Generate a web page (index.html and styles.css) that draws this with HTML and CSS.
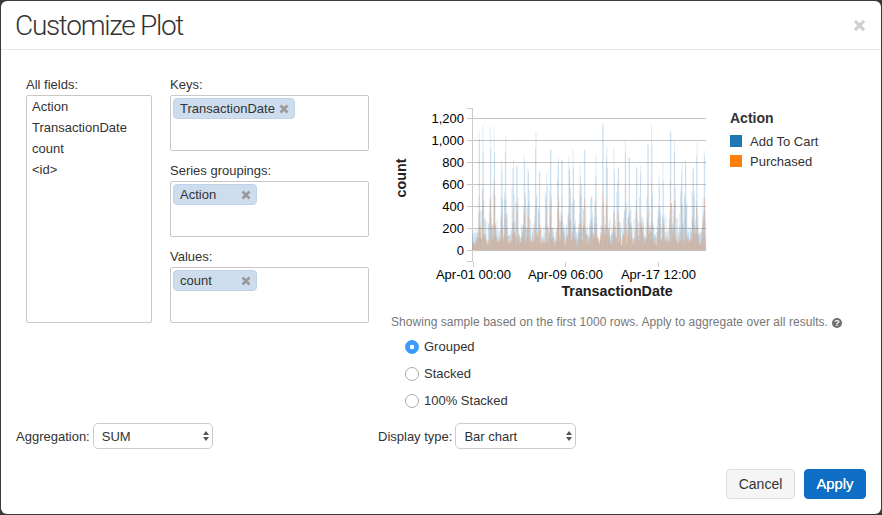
FILE: index.html
```html
<!DOCTYPE html>
<html>
<head>
    <meta charset="utf-8" />
    <title>Customize Plot</title>
    <link rel="stylesheet" href="styles.css">
</head>
<body>
    <svg class="defs" width="0" height="0">
        <symbol id="cross" viewBox="0 0 10 10">
            <path d="M1.5 1.5L8.5 8.5M8.5 1.5L1.5 8.5" />
        </symbol>
    </svg>
    <div class="modal">
        <div class="modal-header">
            <h1 class="modal-title">Customize Plot</h1>
            <svg class="close-icon"><use href="#cross" /></svg>
        </div>
        <div class="modal-body">
            <div class="main-row">
                <div class="all-fields">
                    <div class="field-label">All fields:</div>
                    <ul class="field-list">
                        <li>Action</li>
                        <li>TransactionDate</li>
                        <li>count</li>
                        <li>&lt;id&gt;</li>
                    </ul>
                </div>
                <div class="groups">
                    <div class="group">
                        <div class="field-label">Keys:</div>
                        <div class="drop-box">
                            <span class="tag">TransactionDate<svg class="tag-x"><use href="#cross" /></svg></span>
                        </div>
                    </div>
                    <div class="group">
                        <div class="field-label">Series groupings:</div>
                        <div class="drop-box">
                            <span class="tag">Action<svg class="tag-x"><use href="#cross" /></svg></span>
                        </div>
                    </div>
                    <div class="group">
                        <div class="field-label">Values:</div>
                        <div class="drop-box">
                            <span class="tag">count<svg class="tag-x"><use href="#cross" /></svg></span>
                        </div>
                    </div>
                </div>
                <div class="preview">
                    <div class="chart-row">
                        <svg id="plot" class="plot" width="326" height="204" viewBox="390 100 326 204"></svg>
                        <div class="legend">
                            <div class="legend-title">Action</div>
                            <div class="legend-item"><span class="swatch swatch-blue"></span>Add To Cart</div>
                            <div class="legend-item"><span class="swatch swatch-orange"></span>Purchased</div>
                        </div>
                    </div>
                    <div class="hint">Showing sample based on the first 1000 rows. Apply to aggregate over all results. <span class="help">?</span></div>
                    <div class="radios">
                        <div class="radio-row"><span class="radio radio-on"></span>Grouped</div>
                        <div class="radio-row"><span class="radio"></span>Stacked</div>
                        <div class="radio-row"><span class="radio"></span>100% Stacked</div>
                    </div>
                </div>
            </div>
            <div class="controls">
                <div class="control">
                    <label>Aggregation:</label>
                    <div class="select-wrap select-short">
                        <select>
                            <option>SUM</option>
                        </select>
                    </div>
                </div>
                <div class="control">
                    <label>Display type:</label>
                    <div class="select-wrap">
                        <select>
                            <option>Bar chart</option>
                        </select>
                    </div>
                </div>
            </div>
        </div>
        <div class="modal-footer">
            <button class="btn btn-cancel">Cancel</button>
            <button class="btn btn-apply">Apply</button>
        </div>
    </div>
    <script src="chart.js"></script>
</body>
</html>
```

FILE: styles.css
```css
* {
    box-sizing: border-box;
}
html, body {
    height: 100%;
}
body {
    margin: 0;
    overflow: hidden;
    background: #3a3a3a;
    font: 13px/17px "Liberation Sans", Arial, sans-serif;
    color: #333;
}
.defs {
    position: absolute;
}
.modal {
    display: flex;
    flex-direction: column;
    width: 880px;
    height: 513px;
    margin: 1px;
    background: #fff;
    border-radius: 6px;
    overflow: hidden;
}
.modal-header {
    display: flex;
    align-items: center;
    justify-content: space-between;
    flex: none;
    height: 49px;
    padding: 1px 15px 0 14px;
    border-bottom: 1px solid #e8e8e8;
}
.modal-title {
    margin: 0;
    font: 300 28px/34px Roboto, "Liberation Sans", sans-serif;
    letter-spacing: -1.3px;
    color: #333;
}
.close-icon {
    width: 13px;
    height: 13px;
    fill: none;
    stroke: #d0d0d0;
    stroke-width: 2.4;
}
.modal-body {
    flex: 1;
    padding: 26px 0 0 15px;
}
.main-row {
    display: flex;
    height: 347px;
}
.all-fields {
    width: 126px;
    margin-left: 10px;
}
.field-label {
    height: 19px;
}
.field-list {
    height: 228px;
    margin: 0;
    padding: 0 5px;
    list-style: none;
    border: 1px solid #c8c8c8;
    border-radius: 2px;
}
.field-list li {
    height: 21px;
    line-height: 21px;
}
.groups {
    width: 199px;
    margin-left: 18px;
}
.group {
    margin-bottom: 11px;
}
.drop-box {
    height: 56px;
    padding: 2px;
    border: 1px solid #c8c8c8;
    border-radius: 2px;
}
.tag {
    display: inline-flex;
    align-items: center;
    justify-content: space-between;
    min-width: 84px;
    height: 21px;
    padding: 0 5px 0 6px;
    background: #cddded;
    border: 1px solid #bfd3e8;
    border-radius: 4px;
}
.tag-x {
    width: 10px;
    height: 10px;
    margin-left: 4px;
    fill: none;
    stroke: #999;
    stroke-width: 2.6;
}
.preview {
    margin-left: 21px;
}
.chart-row {
    display: flex;
    height: 204px;
    margin-top: 24px;
}
.plot {
    flex: none;
}
.plot text {
    font: 13px "Liberation Sans", Arial, sans-serif;
    fill: #000;
}
.plot .axis-title {
    font-weight: bold;
    font-size: 14.3px;
    fill: #222;
}
.legend {
    margin-left: 14px;
    padding-top: 10px;
}
.legend-title {
    margin-bottom: 4px;
    font-size: 14px;
    font-weight: bold;
}
.legend-item {
    display: flex;
    align-items: center;
    height: 20px;
}
.swatch {
    width: 12px;
    height: 12px;
    margin-right: 8px;
}
.swatch-blue {
    background: #1f77b4;
}
.swatch-orange {
    background: #ff7f0e;
}
.hint {
    display: flex;
    align-items: center;
    gap: 4px;
    height: 17px;
    margin: 10px 0 0 1px;
    font-size: 12px;
    letter-spacing: 0.05px;
    color: #777;
    white-space: nowrap;
}
.help {
    width: 10px;
    height: 10px;
    border-radius: 50%;
    background: #6f6f6f;
    color: #fff;
    font-size: 9px;
    font-weight: bold;
    line-height: 10px;
    text-align: center;
}
.radios {
    margin-top: 2px;
    padding-left: 15px;
}
.radio-row {
    display: flex;
    align-items: center;
    height: 27px;
}
.radio {
    width: 14px;
    height: 14px;
    margin-right: 5px;
    background: #fff;
    border: 1px solid #aaa;
    border-radius: 50%;
}
.radio-on {
    background: radial-gradient(circle, #fff 0 2px, #3b99fc 2.6px);
    border-color: #3b99fc;
}
.controls {
    display: grid;
    grid-template-columns: 362px auto;
}
.control {
    display: flex;
    align-items: center;
    gap: 3px;
    height: 26px;
}
.select-wrap {
    position: relative;
    width: 121px;
    height: 26px;
}
.select-short {
    width: 120px;
}
.select-wrap::before, .select-wrap::after {
    content: "";
    position: absolute;
    right: 4px;
    border-left: 3.5px solid transparent;
    border-right: 3.5px solid transparent;
}
.select-wrap::before {
    top: 8px;
    border-bottom: 4px solid #555;
}
.select-wrap::after {
    top: 14px;
    border-top: 4px solid #555;
}
select {
    appearance: none;
    width: 100%;
    height: 100%;
    padding: 0 8px;
    background: #fff;
    border: 1px solid #ccc;
    border-radius: 5px;
    font: 13px "Liberation Sans", Arial, sans-serif;
    color: #333;
}
.modal-footer {
    display: flex;
    justify-content: flex-end;
    gap: 9px;
    flex: none;
    padding: 0 15px 15px;
}
.btn {
    height: 30px;
    border-radius: 4px;
    font: 14px "Liberation Sans", Arial, sans-serif;
}
.btn-cancel {
    width: 69px;
    background: #f5f5f5;
    border: 1px solid #ddd;
    color: #333;
}
.btn-apply {
    width: 62px;
    background: #0f6ec6;
    border: 1px solid #0f6ec6;
    color: #fff;
    font-size: 14.8px;
    text-shadow: 0 0 0.5px #fff;
}
```

FILE: chart.js
```js
var plot = document.getElementById('plot');
var NS = 'http://www.w3.org/2000/svg';

// the plot's viewBox uses the page coordinates of the chart
var x0 = 472, x1 = 706, y0 = 250, perUnit = 0.1097;

var seed = 12345;
function rnd() {
    seed = (seed * 1103515245 + 12345) % 2147483648;
    return seed / 2147483648;
}

function add(name, attrs, text) {
    var el = document.createElementNS(NS, name);
    for (var k in attrs) {
        el.setAttribute(k, attrs[k]);
    }
    if (text) {
        el.textContent = text;
    }
    plot.appendChild(el);
    return el;
}

function line(x1, y1, x2, y2, color) {
    add('line', { x1: x1, y1: y1, x2: x2, y2: y2, stroke: color, 'stroke-width': 1, 'shape-rendering': 'crispEdges' });
}

// peak heights of each day, two spikes a day
var peaks = [
    [1100, 1170], [1130, 1120], [850, 1040], [980, 950], [900, 950], [1120, 750],
    [770, 1120], [850, 830], [900, 920], [840, 1040], [640, 880], [1180, 1000],
    [930, 800], [1040, 1010], [850, 900], [1000, 1190], [720, 830], [1130, 1000],
    [880, 1020], [760, 980], [1010, 700]
];

function point(x) {
    var day = Math.floor((x - 476) / 11.25);
    var blue = 30 + rnd() * 150;
    var orange = 35 + rnd() * 50;
    if (rnd() < 0.12) {
        blue += rnd() * 60;
        orange += rnd() * 40;
    }
    if (day >= 0 && day < peaks.length) {
        var start = 479.3 + day * 11.25;
        var a = Math.abs(x - start), b = Math.abs(x - start - 3.9);
        var d = Math.min(a, b);
        if (d < 0.5) {
            blue = peaks[day][a < b ? 0 : 1] * (0.75 + rnd() * 0.25);
            orange = blue * (0.35 + rnd() * 0.25);
        } else if (d < 1.5) {
            blue += rnd() * 420;
            orange += rnd() * 220;
        } else if (d < 3) {
            blue += rnd() * 150;
            orange += rnd() * 90;
        }
    }
    return [blue, orange];
}

function grid() {
    var labels = ['0', '200', '400', '600', '800', '1,000', '1,200'];
    for (var i = 0; i < labels.length; i++) {
        var y = Math.round(y0 - i * 200 * perUnit) + 0.5;
        line(467, y, x1, y, '#c4c4c4');
        add('text', { x: 464, y: y + 4.5, 'text-anchor': 'end' }, labels[i]);
    }
    line(472.5, 108, 472.5, 262, '#ccc');
    line(467, 108.5, 472, 108.5, '#ccc');
    line(467, 261.5, 472, 261.5, '#ccc');
}

function bars() {
    var blue = '', orange = '';
    for (var x = x0 + 0.5; x < x1; x += 0.47) {
        var p = point(x);
        blue += 'M' + x.toFixed(2) + ' ' + y0 + 'V' + (y0 - p[0] * perUnit).toFixed(1);
        orange += 'M' + x.toFixed(2) + ' ' + y0 + 'V' + (y0 - p[1] * perUnit).toFixed(1);
    }
    add('path', { d: blue, stroke: '#1f77b4', 'stroke-width': 0.47, 'stroke-opacity': 0.33, fill: 'none' });
    add('path', { d: orange, stroke: '#f0803a', 'stroke-width': 0.47, 'stroke-opacity': 0.4, fill: 'none' });
}

function xaxis() {
    var ticks = [[473.5, 'Apr-01 00:00'], [565.5, 'Apr-09 06:00'], [658.5, 'Apr-17 12:00']];
    for (var i = 0; i < ticks.length; i++) {
        line(ticks[i][0], 262, ticks[i][0], 267, '#ccc');
        add('text', { x: ticks[i][0], y: 279, 'text-anchor': 'middle' }, ticks[i][1]);
    }
    add('text', { x: 617, y: 296, 'text-anchor': 'middle', 'class': 'axis-title' }, 'TransactionDate');
    add('text', { x: 0, y: 0, 'text-anchor': 'middle', 'class': 'axis-title', transform: 'translate(406 178) rotate(-90)' }, 'count');
}

grid();
bars();
xaxis();
```
